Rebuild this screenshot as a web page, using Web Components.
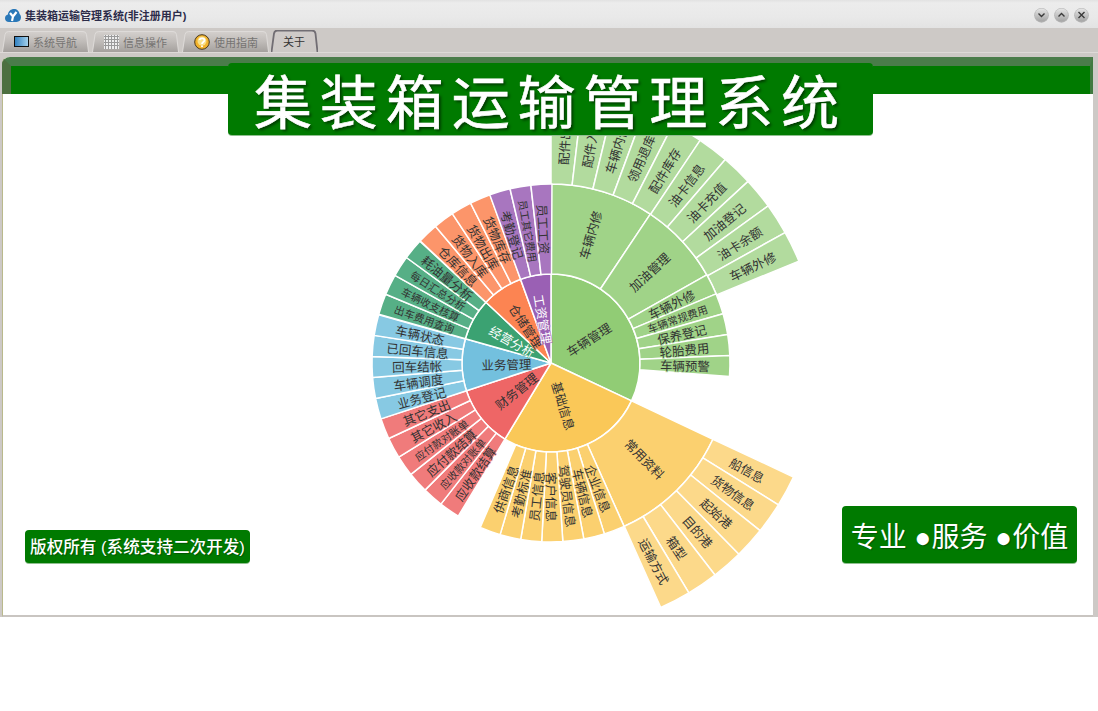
<!DOCTYPE html>
<html lang="zh">
<head>
<meta charset="utf-8">
<title>集装箱运输管理系统</title>
<style>
  html, body { margin: 0; background: #fff; }
  body { font-family: "Noto Sans CJK SC", "Liberation Sans", sans-serif; }
</style>
</head>
<body>
<app-window>
  <title-bar slot="title">集装箱运输管理系统(非注册用户)</title-bar>
  <tab-strip slot="tabs">
    <tab-item width="87" icon="screen">系统导航</tab-item>
    <tab-item width="87" icon="grid">信息操作</tab-item>
    <tab-item width="87" icon="help">使用指南</tab-item>
    <tab-item width="47" active>关于</tab-item>
  </tab-strip>
  <about-page slot="page"></about-page>
</app-window>

<script>
class AppWindow extends HTMLElement {
  constructor() {
    super();
    this.attachShadow({ mode: "open" });
    this.shadowRoot.innerHTML = `
      <style>
        :host {
          display: flex;
          flex-direction: column;
          width: 1098px;
          height: 617px;
          background: #cdc9c6;
        }
        .page {
          flex: 1;
          display: flex;
          min-height: 0;
          padding: 4px 5px 0 2px;
          border-top: 1px solid #dedad8;
        }
      </style>
      <slot name="title"></slot>
      <slot name="tabs"></slot>
      <div class="page"><slot name="page"></slot></div>
    `;
  }
}

class TitleBar extends HTMLElement {
  constructor() {
    super();
    this.attachShadow({ mode: "open" });
    this.shadowRoot.innerHTML = `
      <style>
        :host {
          display: flex;
          align-items: center;
          height: 28px;
          padding: 2px 9px 0 5px;
          box-sizing: border-box;
          background: linear-gradient(#e2e2e2 0, #ececec 3px, #e9e9e9 60%, #e3e3e3);
          font: bold 11px "Liberation Sans", "Noto Sans CJK SC", sans-serif;
          color: #2c2c4a;
        }
        .text { margin-left: 4px; flex: 1; }
        .btns { display: flex; gap: 5px; }
        .btns svg { display: block; }
      </style>
      <svg width="16" height="16" viewBox="0 0 16 16">
        <path d="M4 15C1.500 15 0 13.200 0 11.200C0 9.300 1.300 7.900 2.900 7.500C3.300 4.200 6 2 8.900 2C12 2 14.200 4.100 14.600 7C15.500 7.900 16 9.200 16 10.600C16 13.100 14.100 15 11.500 15Z" fill="#2a78b8"/>
        <path d="M5 6L8 9.500L11.500 5M8 9.500L7 14" fill="none" stroke="#fff" stroke-width="2.200"/>
      </svg>
      <span class="text"><slot></slot></span>
      <div class="btns">
        ${["M-3 -1.500L0 1.500L3 -1.500", "M-3 1.500L0 -1.500L3 1.500", "M-3 -3L3 3M3 -3L-3 3"].map(d => `
          <svg width="15" height="16" viewBox="-7.500 -8 15 16">
            <defs><linearGradient id="b" x1="0" y1="0" x2="0" y2="1"><stop offset="0" stop-color="#e6e6e6"/><stop offset="1" stop-color="#a4a4a4"/></linearGradient></defs>
            <circle r="7.300" cy="0.400" fill="#b4b4b4"/>
            <circle r="6.600" fill="url(#b)"/>
            <path d="${d}" fill="none" stroke="#3a3a3a" stroke-width="1.400"/>
          </svg>`).join("")}
      </div>
    `;
  }
}

class TabStrip extends HTMLElement {
  constructor() {
    super();
    this.attachShadow({ mode: "open" });
    this.shadowRoot.innerHTML = `
      <style>
        :host {
          display: flex;
          align-items: flex-end;
          gap: 3px;
          height: 24px;
          padding-left: 2px;
          box-sizing: border-box;
          background: #cdc9c6;
        }
      </style>
      <slot></slot>
    `;
  }
}

class TabItem extends HTMLElement {
  constructor() {
    super();
    this.attachShadow({ mode: "open" });
  }

  connectedCallback() {
    const w = Number(this.getAttribute("width"));
    const active = this.hasAttribute("active");
    const h = active ? 22 : 21;
    const icons = {
      screen: `<svg width="15" height="12" viewBox="0 0 15 12"><defs><linearGradient id="s"><stop offset="0" stop-color="#2f7fc0"/><stop offset="1" stop-color="#a8d4ee"/></linearGradient></defs><rect x=".5" y=".5" width="14" height="10" fill="url(#s)" stroke="#111"/></svg>`,
      grid: `<svg width="15" height="14" viewBox="0 0 15 14"><rect width="15" height="14" fill="#eee"/><path d="M1.500 0V14M4.500 0V14M7.500 0V14M10.500 0V14M13.500 0V14M0 1.500H15M0 4.500H15M0 7.500H15M0 10.500H15" stroke="#9a9a9a"/></svg>`,
      help: `<svg width="16" height="16" viewBox="0 0 16 16"><circle cx="8" cy="8" r="7.300" fill="#f2b32c" stroke="#4a3a20"/><circle cx="8" cy="7" r="4.500" fill="#f8e08a"/><path d="M5.500 6C6 3.800 10.500 3.800 10.500 6.200C10.500 8 8 8 8 10" fill="none" stroke="#fff" stroke-width="1.800"/><circle cx="8" cy="12.200" r="1" fill="#fff"/></svg>`
    };
    const fill = active
      ? `<stop offset="0" stop-color="#cfcac8"/><stop offset="1" stop-color="#cdc9c6"/>`
      : `<stop offset="0" stop-color="#d4d0cd"/><stop offset=".5" stop-color="#bfbbb8"/><stop offset="1" stop-color="#a4a09d"/>`;
    const edge = `M.5 ${h}L3 3.500Q3.500 .5 6.500 .5H${w - 6}Q${w - 3} .5 ${w - 2.500} 3.500L${w - .5} ${h}`;
    this.shadowRoot.innerHTML = `
      <style>
        :host {
          display: flex;
          position: relative;
          align-items: center;
          width: ${w}px;
          height: ${h}px;
          margin-left: ${active ? -1 : 0}px;
          box-sizing: border-box;
          padding: 0 0 0 12px;
          gap: 4px;
          font: 11px "Noto Sans CJK SC", "Liberation Sans", sans-serif;
          color: ${active ? "#333" : "#767472"};
        }
        .shape { position: absolute; left: 0; top: 0; z-index: 0; }
        .icon, .label { position: relative; z-index: 1; }
        .icon { display: flex; }
      </style>
      <svg class="shape" width="${w}" height="${h}">
        <defs><linearGradient id="t" x1="0" y1="0" x2="0" y2="1">${fill}</linearGradient></defs>
        <path d="${edge}Z" fill="url(#t)"/>
        <path d="${edge}" fill="none" stroke="${active ? "#716d73" : "#dedbd9"}" stroke-width="${active ? 1.800 : 1}"/>
      </svg>
      ${icons[this.getAttribute("icon")] ? `<span class="icon">${icons[this.getAttribute("icon")]}</span>` : ""}
      <span class="label"><slot></slot></span>
    `;
  }
}

// angles in degrees, clockwise from the top, same as the chart it copies
const STEP = 6.77;
function leaves(names, start) {
  return names.map((name, i) => ({ name, a0: start + i * STEP, a1: start + (i + 1) * STEP }));
}

const CHART = [
  { name: "车辆管理", a0: 0, a1: 115.2, color: [145, 204, 117], kids: [
    { name: "车辆内修", a0: 0, a1: 33.7, kids: leaves(["配件出库", "配件入库", "车辆内修", "领用退库", "配件库存"], 0) },
    { name: "加油管理", a0: 33.7, a1: 60.5, kids: leaves(["油卡信息", "油卡充值", "加油登记", "油卡余额", "车辆外修"], 33.8) },
    ...leaves(["车辆外修", "车辆常规费用", "保养登记", "轮胎费用", "车辆预警"], 60.5)
  ] },
  { name: "基础信息", a0: 115.2, a1: 211.2, color: [250, 200, 88], kids: [
    { name: "常用资料", a0: 115.2, a1: 155.9, kids: leaves(["船信息", "货物信息", "起始港", "目的港", "箱型", "运输方式"], 115.2) },
    ...leaves(["企业信息", "车辆信息", "驾驶员信息", "客户信息", "员工信息", "考勤标准", "供商信息"], 155.9)
  ] },
  { name: "财务管理", a0: 211.2, a1: 251.8, color: [238, 102, 102],
    kids: leaves(["应收款结算", "应收款对账单", "应付款结算", "应付款对账单", "其它收入", "其它支出"], 211.2) },
  { name: "业务管理", a0: 251.8, a1: 285.8, color: [115, 192, 222],
    kids: leaves(["业务登记", "车辆调度", "回车结帐", "已回车信息", "车辆状态"], 251.8) },
  { name: "经营分析", a0: 285.8, a1: 313, color: [59, 162, 114], light: true,
    kids: leaves(["出车费用查询", "车辆收支核算", "每日汇总分析", "耗油量分析"], 285.8) },
  { name: "仓储管理", a0: 313, a1: 340, color: [252, 132, 82],
    kids: leaves(["仓库信息", "货物入库", "货物出库", "货物库存"], 313) },
  { name: "工资管理", a0: 340, a1: 360, color: [154, 96, 180], light: true,
    kids: leaves(["考勤登记", "员工其它费用", "员工工资"], 340) }
];

const RINGS = [[0, 89], [89, 179], [179, 268]];
const LIFT = [0, 0.14, 0.3];

class SunBurst extends HTMLElement {
  constructor() {
    super();
    this.attachShadow({ mode: "open" });
  }

  connectedCallback() {
    this.cx = Number(this.getAttribute("cx"));
    this.cy = Number(this.getAttribute("cy"));
    this.sectors = "";
    this.labels = "";
    CHART.forEach(node => this.addNode(node, 0, node.color, node.light));
    this.shadowRoot.innerHTML = `
      <style>
        :host { display: block; position: absolute; inset: 0; }
        svg { display: block; width: 100%; height: 100%; }
        text {
          font-family: "Noto Sans CJK SC", "Liberation Sans", sans-serif;
          text-anchor: middle;
          dominant-baseline: central;
          paint-order: stroke;
          stroke-width: 1.600px;
          stroke-opacity: .7;
        }
      </style>
      <svg>
        <g stroke="#fff" stroke-width="1.500" stroke-linejoin="round">${this.sectors}</g>
        ${this.labels}
      </svg>
    `;
  }

  point(angle, r) {
    const rad = angle * Math.PI / 180;
    return [this.cx + r * Math.sin(rad), this.cy - r * Math.cos(rad)].map(v => v.toFixed(2)).join(" ");
  }

  addNode(node, depth, color, light) {
    const [r0, r1] = RINGS[depth];
    const big = node.a1 - node.a0 > 180 ? 1 : 0;
    const lift = LIFT[depth];
    const rgb = color.map(c => Math.round(c + (255 - c) * lift)).join(",");
    const inner = r0 ? `L${this.point(node.a1, r0)}A${r0} ${r0} 0 ${big} 0 ${this.point(node.a0, r0)}` : `L${this.point(0, 0)}`;
    this.sectors += `<path fill="rgb(${rgb})" d="M${this.point(node.a0, r1)}A${r1} ${r1} 0 ${big} 1 ${this.point(node.a1, r1)}${inner}Z"/>`;

    const mid = (node.a0 + node.a1) / 2;
    const rot = mid < 180 ? mid - 90 : mid + 90;
    const [x, y] = this.point(mid, (r0 + r1) / 2).split(" ");
    const size = node.name.length >= 6 ? 10.5 : 12.5;
    const fill = depth === 0 && light ? "#fff" : "#333";
    this.labels += `<text x="${x}" y="${y}" font-size="${size}" fill="${fill}" stroke="rgb(${rgb})" transform="rotate(${rot.toFixed(1)} ${x} ${y})">${node.name}</text>`;

    (node.kids || []).forEach(kid => this.addNode(kid, depth + 1, color, light));
  }
}

class GreenBox extends HTMLElement {
  constructor() {
    super();
    this.attachShadow({ mode: "open" });
    this.shadowRoot.innerHTML = `
      <style>
        :host {
          display: block;
          box-sizing: border-box;
          background: #007a00;
          border-radius: 4px;
          color: #fff;
          white-space: nowrap;
          text-align: center;
          box-shadow: 0 1px 0 #8fbf8f;
        }
      </style>
      <slot></slot>
    `;
  }
}

class AboutPage extends HTMLElement {
  constructor() {
    super();
    this.attachShadow({ mode: "open" });
    this.shadowRoot.innerHTML = `
      <style>
        :host {
          display: flex;
          flex-direction: column;
          position: relative;
          flex: 1;
          background: #fff;
          border-left: 1px solid #b9b98c;
          border-bottom: 2px solid #c9c5c1;
          border-radius: 6px 0 0 0;
          font-family: "Liberation Sans", "Noto Sans CJK SC", sans-serif;
        }
        .band {
          position: relative;
          display: flex;
          justify-content: center;
          box-sizing: border-box;
          height: 37px;
          margin-left: -1px;
          flex: none;
          border-radius: 8px 0 0 0;
          background: #007a00;
          border-style: solid;
          border-width: 9px 3px 0 9px;
          border-color: #4a7c4a #3f7a3f #4a7c4a #4d7040;
        }
        .title {
          position: relative;
          margin-top: -3px;
          width: 645px;
          height: 72px;
          font-size: 58px;
          line-height: 82px;
          letter-spacing: 7.900px;
          -webkit-text-stroke: .6px #fff;
          text-shadow: 2px 2px 3px rgba(0,0,0,.55);
        }
        .foot {
          position: relative;
          margin-top: auto;
          display: flex;
          justify-content: space-between;
          align-items: flex-end;
          padding: 0 16px 52px 22px;
        }
        .copy {
          width: 225px;
          height: 33px;
          font-size: 16.600px;
          font-weight: 500;
          line-height: 36px;
          text-shadow: 1px 1px 1px rgba(0,0,0,.3);
        }
        .motto {
          width: 235px;
          height: 57px;
          font-size: 28px;
          line-height: 64px;
          text-shadow: 1px 1px 1px rgba(0,0,0,.3);
        }
      </style>
      <sun-burst cx="548" cy="306"></sun-burst>
      <div class="band"><green-box class="title">集装箱运输管理系统</green-box></div>
      <div class="foot">
        <green-box class="copy">版权所有 (系统支持二次开发)</green-box>
        <green-box class="motto">专业 ●服务 ●价值</green-box>
      </div>
    `;
  }
}

customElements.define("app-window", AppWindow);
customElements.define("title-bar", TitleBar);
customElements.define("tab-strip", TabStrip);
customElements.define("tab-item", TabItem);
customElements.define("sun-burst", SunBurst);
customElements.define("green-box", GreenBox);
customElements.define("about-page", AboutPage);
</script>
</body>
</html>
